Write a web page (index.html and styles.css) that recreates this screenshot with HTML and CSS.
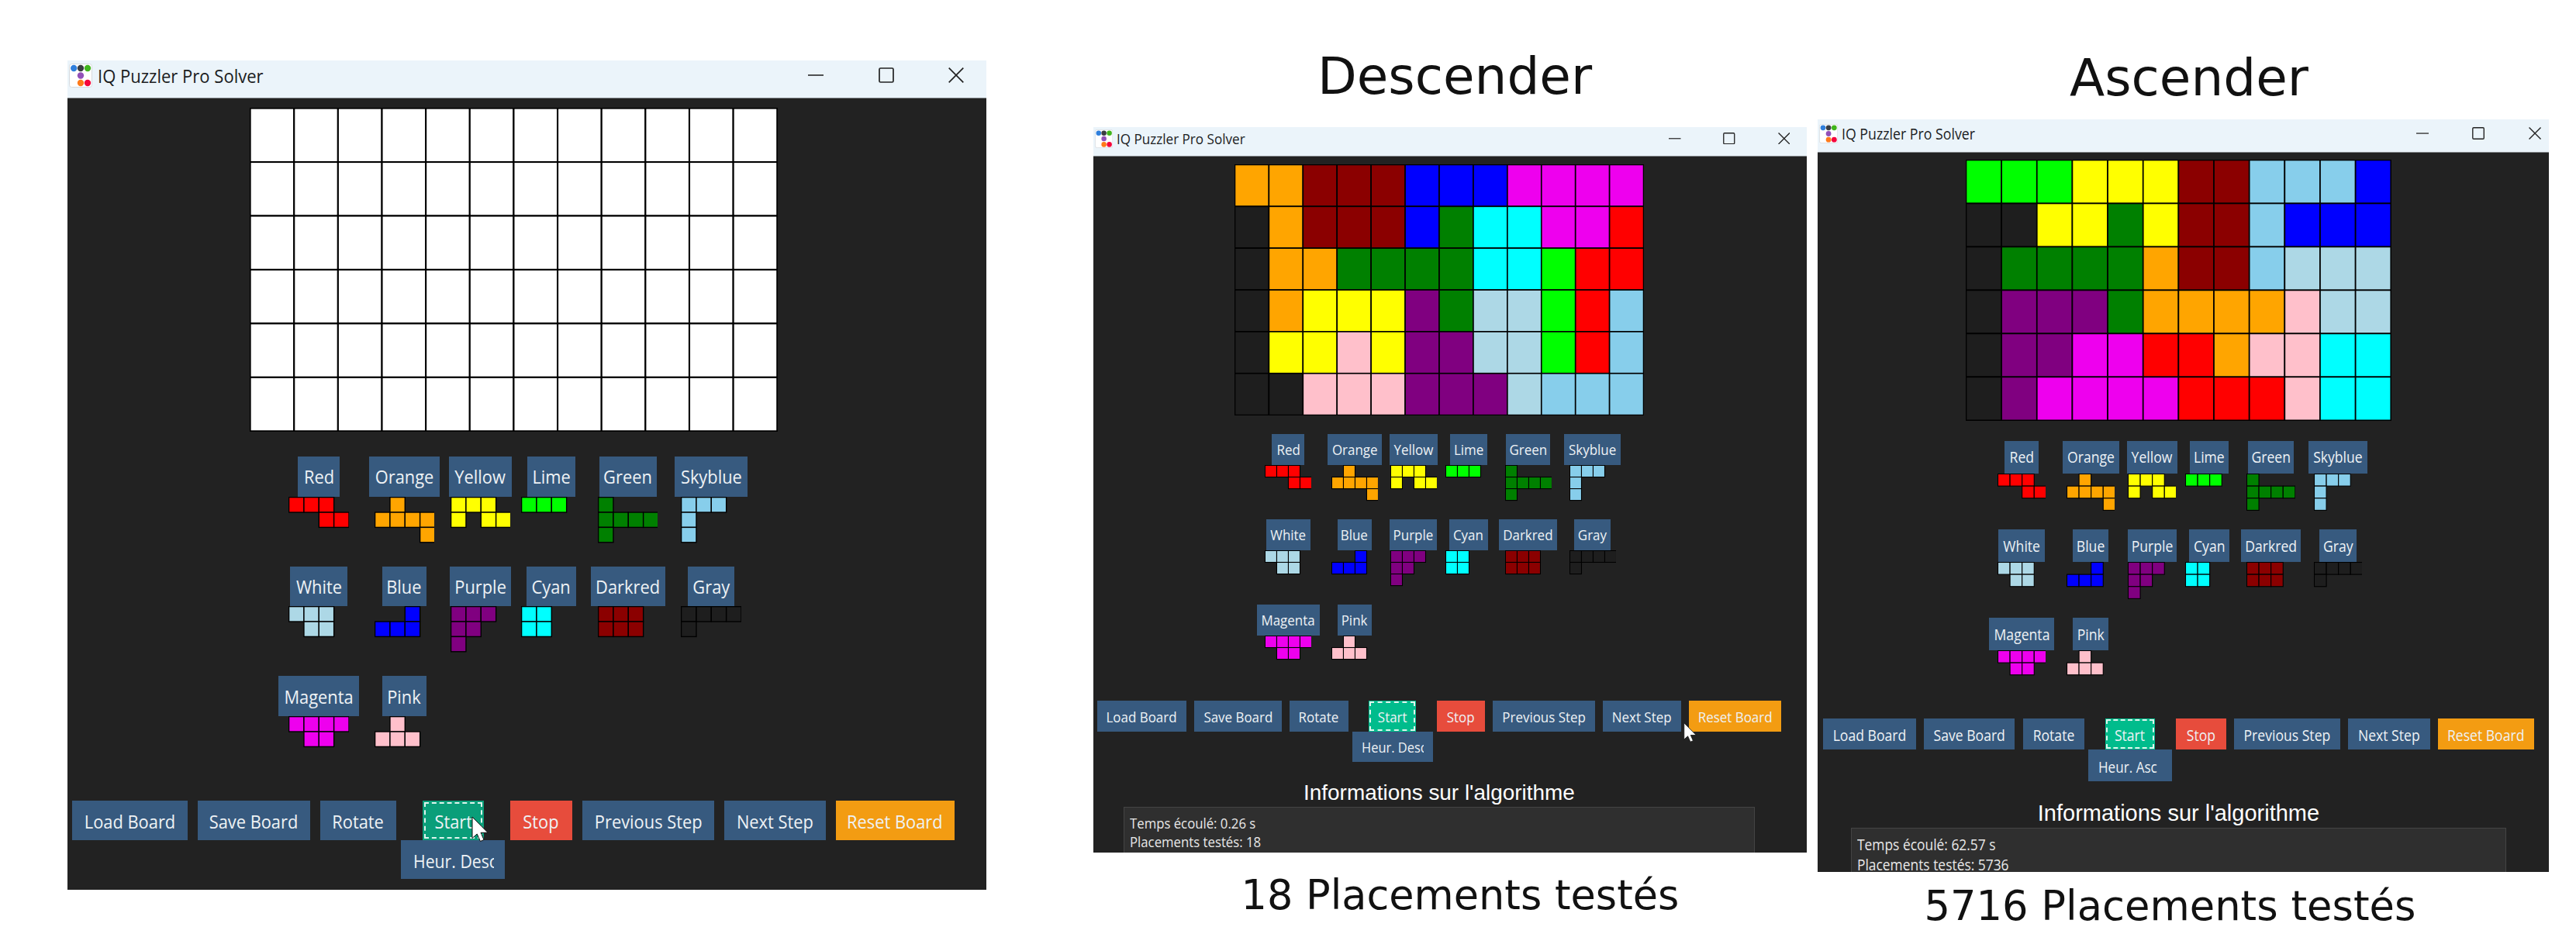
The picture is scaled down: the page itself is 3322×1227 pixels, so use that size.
FILE: index.html
```html
<!DOCTYPE html>
<html lang="fr">
<head>
<meta charset="utf-8">
<title>IQ Puzzler Pro Solver</title>
<link rel="stylesheet" href="styles.css">
</head>
<body>
<main class="page">
  <figure class="shot shot-empty">
    <div class="window" data-board="empty" data-heuristic="Heur. Desc"></div>
  </figure>
  <figure class="shot shot-desc">
    <h2 class="heading">Descender</h2>
    <div class="window" data-board="desc" data-heuristic="Heur. Desc" data-time="0.26" data-count="18"></div>
    <figcaption class="caption">18 Placements testés</figcaption>
  </figure>
  <figure class="shot shot-asc">
    <h2 class="heading">Ascender</h2>
    <div class="window" data-board="asc" data-heuristic="Heur. Asc" data-time="62.57" data-count="5736"></div>
    <figcaption class="caption">5716 Placements testés</figcaption>
  </figure>
</main>
<script src="app.js"></script>
</body>
</html>
```
FILE: styles.css
```css
* { box-sizing: border-box; }

body { margin: 0; background: #fff; }

.page {
  display: flex;
  align-items: flex-start;
  width: 3322px;
  height: 1227px;
  overflow: hidden;
}

.shot { margin: 0; display: flex; flex-direction: column; }

.shot-empty {
  --u: 1px; --title-extra: 0px; --controls-right: 29px; --start: #0a9e79;
  width: 1185px; margin-left: 87px; padding-top: 78px;
}
.shot-empty .window { height: 1070px; }

.shot-desc {
  --u: 0.7755px; --title-extra: 0px; --controls-right: 22px; --start: #00bc8c;
  width: 920px; margin-left: 138px;
}
.shot-desc .window { height: 936px; }
.shot-desc .heading { height: 164px; padding: 33px 0 0 12px; line-height: 131px; }
.shot-desc .caption { padding-left: 26px; line-height: 110px; font-size: 52.5px; }

.shot-asc {
  --u: 0.806px; --title-extra: 3px; --controls-right: 9.5px; --start: #00bc8c;
  width: 943px; margin-left: 14px;
}
.shot-asc .window { height: 971px; }
.shot-asc .content { margin-left: 2px; }
.shot-asc .heading { height: 154px; padding: 47px 0 0 15px; line-height: 107px; }
.shot-asc .caption { padding-right: 34px; line-height: 88px; font-size: 52.7px; }

.heading, .caption {
  margin: 0;
  font-family: "DejaVu Sans", sans-serif;
  font-weight: 400;
  color: #111;
  text-align: center;
  white-space: nowrap;
}
.heading { font-size: 66px; }

.window {
  position: relative;
  overflow: hidden;
  background: #222;
  font-family: "Open Sans", "Noto Sans", sans-serif;
  font-size: calc(var(--u) * 24);
}

.titlebar {
  display: flex;
  align-items: center;
  height: calc(var(--u) * 49.3 + var(--title-extra));
  padding: var(--title-extra) var(--controls-right) calc(var(--u) * 10) calc(var(--u) * 2);
  background: #ebf4fa;
  border-bottom: 1px solid #84898c;
  color: #1b1d1f;
}
.app-icon { display: block; width: calc(var(--u) * 30); height: calc(var(--u) * 31); }
.title {
  flex: 1;
  margin-left: calc(var(--u) * 7);
  padding-top: calc(var(--u) * 2);
  line-height: 1;
  white-space: nowrap;
}
.title .label { transform: scaleX(0.918); transform-origin: left; }
.controls { display: flex; gap: calc(var(--u) * 70.5); }
.controls svg { display: block; width: calc(var(--u) * 20); height: calc(var(--u) * 20); }

.label { display: inline-block; transform: scaleX(0.91); white-space: nowrap; }

.content {
  display: flex;
  flex-direction: column;
  align-items: center;
  width: calc(var(--u) * 1150);
  padding-top: calc(var(--u) * 12);
}
.board {
  display: block;
  flex: none;
  width: calc(var(--u) * 681);
  height: calc(var(--u) * 418);
}

.pieces {
  display: grid;
  grid-template-columns:
    calc(var(--u) * 104.5) calc(var(--u) * 90.6) calc(var(--u) * 80.4)
    calc(var(--u) * 77.2) calc(var(--u) * 95.5) calc(var(--u) * 94);
  grid-auto-rows: calc(var(--u) * 141.7);
  column-gap: calc(var(--u) * 12.65);
  margin: calc(var(--u) * 31.7) calc(var(--u) * 1) 0 0;
}
.piece { display: flex; flex-direction: column; align-items: center; }
.piece svg { display: block; width: calc(var(--u) * 77.4); height: calc(var(--u) * 78); }

.btn {
  display: flex;
  flex: none;
  align-items: center;
  justify-content: center;
  background: #375a7f;
  color: #eef2f5;
  line-height: 1;
  white-space: nowrap;
}
.piece .btn { height: calc(var(--u) * 51.8); padding-top: calc(var(--u) * 1); }

.toolbar {
  display: flex;
  align-items: flex-start;
  gap: calc(var(--u) * 12.8);
  margin-top: calc(var(--u) * 18.8);
}
.toolbar .btn { height: calc(var(--u) * 50.7); padding-top: calc(var(--u) * 3.5); }
.run {
  display: flex;
  flex-direction: column;
  align-items: center;
  margin: 0 calc(var(--u) * -6.4);
}
.run .btn-heur { justify-content: flex-start; padding-left: calc(var(--u) * 16); }
.clip { overflow: hidden; width: calc(var(--u) * 103.5); padding: calc(var(--u) * 6) 0; }
.clip .label { transform: scaleX(0.885); transform-origin: left; }
.btn-start {
  background: var(--start);
  outline: 2px dashed #dff5ee;
  outline-offset: calc(var(--u) * -4.5);
}
.btn-stop { background: #e74c3c; }
.btn-reset { background: #f39c12; }

.info-title {
  margin: calc(var(--u) * 31) 0 0;
  height: calc(var(--u) * 43.5);
  line-height: calc(var(--u) * 41);
  font-family: "Liberation Sans", Arial, sans-serif;
  font-size: calc(var(--u) * 36);
  font-weight: 400;
  color: #fff;
}
.info {
  width: calc(var(--u) * 1049);
  height: calc(var(--u) * 200);
  padding: calc(var(--u) * 10) calc(var(--u) * 9);
  background: #2f2f2f;
  border: 1.5px solid #444;
  color: #e8e8e8;
  line-height: calc(var(--u) * 31.6);
}
.info p { margin: 0; }
.info .label { transform: scaleX(0.9); transform-origin: left; }

.cursor { position: absolute; width: calc(var(--u) * 22); height: calc(var(--u) * 34); }
.shot-empty .cursor { left: 521px; top: 975px; }
.shot-desc .cursor { left: 761px; top: 768px; }
```
FILE: app.js
```javascript
const COLORS = {
  R: '#ff0000', O: '#ffa500', Y: '#ffff00', L: '#00ff00', G: '#008000',
  S: '#87ceeb', W: '#add8e6', B: '#0000ff', P: '#800080', C: '#00ffff',
  D: '#8b0000', K: '#1e1e1e', M: '#ee00ee', I: '#ffc0cb', '.': '#ffffff'
};

const BOARDS = {
  empty: Array(6).fill('............'),
  desc: ['OODDDBBBMMMM', 'KODDDBGCCMMR', 'KOOGGGGCCLRR',
         'KOYYYPGWWLRS', 'KYYIYPPWWLRS', 'KKIIIPPPWSSS'],
  asc: ['LLLYYYDDSSSB', 'KKYYGYDDSBBB', 'KGGGGODDSWWW',
        'KPPPGOOOOIWW', 'KPPMMRROIICC', 'KPMMMMRRRICC']
};

// name, button width, colour key, shape rows
const PIECES = [
  ['Red', 54.3, 'R', ['xxx', '  xx']],
  ['Orange', 90.6, 'O', [' x', 'xxxx', '   x']],
  ['Yellow', 80.4, 'Y', ['xxx', 'x xx']],
  ['Lime', 62, 'L', ['xxx']],
  ['Green', 73.8, 'G', ['x', 'xxxx', 'x']],
  ['Skyblue', 94, 'S', ['xxx', 'x', 'x']],
  ['White', 74, 'W', ['xxx', ' xx']],
  ['Blue', 56.7, 'B', ['  x', 'xxx']],
  ['Purple', 78.4, 'P', ['xxx', 'xx', 'x']],
  ['Cyan', 64.2, 'C', ['xx', 'xx']],
  ['Darkred', 95.5, 'D', ['xxx', 'xxx']],
  ['Gray', 60.4, 'K', ['xxxx', 'x']],
  ['Magenta', 104.5, 'M', ['xxxx', ' xx']],
  ['Pink', 56.7, 'I', [' x', 'xxx']]
];

function cells(rows, w, h, stroke, fill) {
  let out = '';
  rows.forEach((row, r) => [...row].forEach((ch, c) => {
    if (ch === ' ') return;
    out += `<rect x="${(c * w + 0.6).toFixed(2)}" y="${(r * h + 0.6).toFixed(2)}" width="${w}" height="${h}" fill="${fill(ch)}" stroke="#000" stroke-width="${stroke}"/>`;
  }));
  return out;
}

const board = rows =>
  `<svg class="board" viewBox="0 0 681 418">${cells(rows, 56.64, 69.45, 2.1, ch => COLORS[ch])}</svg>`;

const button = (text, width, cls = '') =>
  `<div class="btn ${cls}" style="width:calc(var(--u) * ${width})"><span class="label">${text}</span></div>`;

const piece = ([name, width, key, rows]) =>
  `<div class="piece">${button(name, width)}<svg viewBox="0 0 77.4 78">${cells(rows, 19.35, 19.4, 1.4, () => COLORS[key])}</svg></div>`;

const ICON = `<svg class="app-icon" viewBox="0 0 30 31">
  <rect x=".5" y=".5" width="29" height="30" rx="3" fill="#fff" stroke="#d5dade"/>
  <circle cx="6.2" cy="6" r="4.2" fill="#2f7fdc"/><circle cx="15" cy="6" r="4.2" fill="#3a3d42"/>
  <circle cx="24" cy="6" r="4.2" fill="#3fb51c"/><circle cx="15" cy="15.5" r="4.2" fill="#9250b8"/>
  <circle cx="15" cy="25" r="4.2" fill="#ff7a1a"/><circle cx="24" cy="25" r="4.2" fill="#f5053c"/></svg>`;

const CONTROLS = `<div class="controls">
  <svg viewBox="0 0 20 20"><path d="M0 10H20" stroke="#333" stroke-width="1.7"/></svg>
  <svg viewBox="0 0 20 20"><rect x="1" y="1" width="18" height="18" rx="1.5" fill="none" stroke="#222" stroke-width="1.7"/></svg>
  <svg viewBox="0 0 20 20"><path d="M.7 .7L19.3 19.3M19.3 .7L.7 19.3" stroke="#222" stroke-width="1.7"/></svg></div>`;

const CURSOR = `<svg class="cursor" viewBox="0 0 22 34"><path d="M1 1V28.500L7.200 23L11.500 32.500L16 30.500L12 21.300H21Z" fill="#fff" stroke="#111" stroke-width="1"/></svg>`;

document.querySelectorAll('.window').forEach(win => {
  const d = win.dataset;
  const info = d.time ? `<h3 class="info-title">Informations sur l'algorithme</h3>
    <div class="info"><p><span class="label">Temps écoulé: ${d.time} s</span></p>
    <p><span class="label">Placements testés: ${d.count}</span></p></div>` : '';
  win.innerHTML = `
    <div class="titlebar">${ICON}<div class="title"><span class="label">IQ Puzzler Pro Solver</span></div>${CONTROLS}</div>
    <div class="content">
      ${board(BOARDS[d.board])}
      <div class="pieces">${PIECES.map(piece).join('')}</div>
      <div class="toolbar">
        ${button('Load Board', 148.7)}${button('Save Board', 145.5)}${button('Rotate', 98)}
        <div class="run">${button('Start', 79.5, 'btn-start')}
          <div class="btn btn-heur" style="width:calc(var(--u) * 134)"><div class="clip"><span class="label">${d.heuristic}</span></div></div>
        </div>
        ${button('Stop', 80.5, 'btn-stop')}${button('Previous Step', 170)}${button('Next Step', 131)}${button('Reset Board', 153.4, 'btn-reset')}
      </div>
      ${info}
    </div>
    ${d.board === 'asc' ? '' : CURSOR}`;
});
```
